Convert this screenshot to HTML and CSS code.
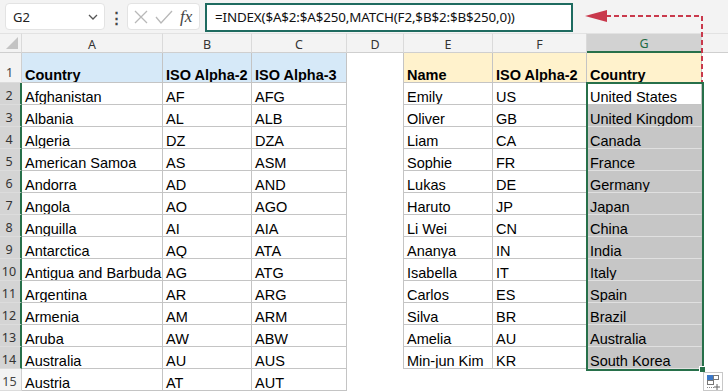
FILE: index.html
```html
<!DOCTYPE html>
<html lang="en">
<head>
    <meta charset="UTF-8">
    <meta name="viewport" content="width=device-width, initial-scale=1.0">
    <title>INDEX MATCH lookup</title>
    <link rel="stylesheet" href="styles.css">
</head>
<body>
<div class="app">
    <div class="toolbar">
        <div class="namebox">
            <span>G2</span>
            <svg class="chev" width="10" height="6" viewBox="0 0 10 6"><polyline points="1,1 5,5 9,1" fill="none" stroke="#555" stroke-width="1.3"/></svg>
        </div>
        <div class="dots">&#8942;</div>
        <div class="fxbox">
            <svg width="16" height="16" viewBox="0 0 16 16"><path d="M2 2 L14 14 M14 2 L2 14" stroke="#b8b8b8" stroke-width="1.3" fill="none"/></svg>
            <svg width="18" height="16" viewBox="0 0 18 16"><polyline points="1,8 6,14 17,2" stroke="#b8b8b8" stroke-width="1.3" fill="none"/></svg>
            <span class="fx">fx</span>
        </div>
        <div class="formula">=INDEX($A$2:$A$250,MATCH(F2,$B$2:$B$250,0))</div>
    </div>

    <div class="grid">
        <!-- column headers -->
        <div class="ch corner"><svg width="12" height="12" viewBox="0 0 12 12"><polygon points="12,0 12,12 0,12" fill="#c4c4c4"/></svg></div>
        <div class="ch">A</div>
        <div class="ch">B</div>
        <div class="ch">C</div>
        <div class="ch">D</div>
        <div class="ch">E</div>
        <div class="ch">F</div>
        <div class="ch sel">G</div>
        <div class="ch last"></div>

        <!-- row 1 -->
        <div class="rh first">1</div>
        <div class="t hb">Country</div>
        <div class="t hb">ISO Alpha-2</div>
        <div class="t hb">ISO Alpha-3</div>
        <div class="c edge"></div>
        <div class="t hy">Name</div>
        <div class="t hy">ISO Alpha-2</div>
        <div class="t hy">Country</div>
        <div class="c"></div>

        <div class="rh sel">2</div>
        <div class="t">Afghanistan</div><div class="t">AF</div><div class="t">AFG</div>
        <div class="c edge"></div>
        <div class="t">Emily</div><div class="t">US</div><div class="t">United States</div>
        <div class="c"></div>

        <div class="rh sel">3</div>
        <div class="t">Albania</div><div class="t">AL</div><div class="t">ALB</div>
        <div class="c edge"></div>
        <div class="t">Oliver</div><div class="t">GB</div><div class="t g">United Kingdom</div>
        <div class="c"></div>

        <div class="rh sel">4</div>
        <div class="t">Algeria</div><div class="t">DZ</div><div class="t">DZA</div>
        <div class="c edge"></div>
        <div class="t">Liam</div><div class="t">CA</div><div class="t g">Canada</div>
        <div class="c"></div>

        <div class="rh sel">5</div>
        <div class="t">American Samoa</div><div class="t">AS</div><div class="t">ASM</div>
        <div class="c edge"></div>
        <div class="t">Sophie</div><div class="t">FR</div><div class="t g">France</div>
        <div class="c"></div>

        <div class="rh sel">6</div>
        <div class="t">Andorra</div><div class="t">AD</div><div class="t">AND</div>
        <div class="c edge"></div>
        <div class="t">Lukas</div><div class="t">DE</div><div class="t g">Germany</div>
        <div class="c"></div>

        <div class="rh sel">7</div>
        <div class="t">Angola</div><div class="t">AO</div><div class="t">AGO</div>
        <div class="c edge"></div>
        <div class="t">Haruto</div><div class="t">JP</div><div class="t g">Japan</div>
        <div class="c"></div>

        <div class="rh sel">8</div>
        <div class="t">Anguilla</div><div class="t">AI</div><div class="t">AIA</div>
        <div class="c edge"></div>
        <div class="t">Li Wei</div><div class="t">CN</div><div class="t g">China</div>
        <div class="c"></div>

        <div class="rh sel">9</div>
        <div class="t">Antarctica</div><div class="t">AQ</div><div class="t">ATA</div>
        <div class="c edge"></div>
        <div class="t">Ananya</div><div class="t">IN</div><div class="t g">India</div>
        <div class="c"></div>

        <div class="rh sel">10</div>
        <div class="t">Antigua and Barbuda</div><div class="t">AG</div><div class="t">ATG</div>
        <div class="c edge"></div>
        <div class="t">Isabella</div><div class="t">IT</div><div class="t g">Italy</div>
        <div class="c"></div>

        <div class="rh sel">11</div>
        <div class="t">Argentina</div><div class="t">AR</div><div class="t">ARG</div>
        <div class="c edge"></div>
        <div class="t">Carlos</div><div class="t">ES</div><div class="t g">Spain</div>
        <div class="c"></div>

        <div class="rh sel">12</div>
        <div class="t">Armenia</div><div class="t">AM</div><div class="t">ARM</div>
        <div class="c edge"></div>
        <div class="t">Silva</div><div class="t">BR</div><div class="t g">Brazil</div>
        <div class="c"></div>

        <div class="rh sel">13</div>
        <div class="t">Aruba</div><div class="t">AW</div><div class="t">ABW</div>
        <div class="c edge"></div>
        <div class="t">Amelia</div><div class="t">AU</div><div class="t g">Australia</div>
        <div class="c"></div>

        <div class="rh sel">14</div>
        <div class="t">Australia</div><div class="t">AU</div><div class="t">AUS</div>
        <div class="c edge"></div>
        <div class="t">Min-jun Kim</div><div class="t">KR</div><div class="t g">South Korea</div>
        <div class="c"></div>

        <div class="rh">15</div>
        <div class="t">Austria</div><div class="t">AT</div><div class="t">AUT</div>
        <div class="c"></div>
        <div class="c"></div><div class="c"></div><div class="c"></div>
        <div class="c"></div>
    </div>

    <!-- selection outline over G2:G14 -->
    <div class="selection"></div>
    <div class="handle"></div>
    <div class="quick">
        <svg width="20" height="19" viewBox="0 0 20 19">
            <rect x="0.5" y="0.5" width="19" height="18" fill="#fff" stroke="#c8c8c8"/>
            <rect x="4" y="3" width="6" height="5" fill="#3b78c9"/>
            <rect x="10.5" y="3.5" width="5" height="4" fill="none" stroke="#777"/>
            <rect x="4.5" y="8.5" width="6" height="4" fill="none" stroke="#777"/>
            <path d="M4 15.5 H11" stroke="#888" stroke-dasharray="1 1"/>
            <path d="M14 12 V18 M11 15 H17" stroke="#666"/>
        </svg>
    </div>

    <!-- arrow pointing to the formula -->
    <svg class="arrow" width="728" height="100" viewBox="0 0 728 100">
        <path d="M606 16 H702 V82" fill="none" stroke="#c9394c" stroke-width="2" stroke-dasharray="5 3"/>
        <polygon points="585,16 607,10 607,22" fill="#c9394c"/>
    </svg>
</div>
</body>
</html>
```

FILE: styles.css
```css
body {
    margin: 0;
    background: #fff;
    font-family: "Liberation Sans", Arial, sans-serif;
    overflow: hidden;
}
.app {
    position: relative;
    width: 728px;
    height: 392px;
    overflow: hidden;
}
.toolbar {
    height: 33px;
    background: #f3f3f3;
    display: flex;
    align-items: center;
    padding-left: 5px;
    box-sizing: border-box;
    font-family: "Noto Sans", "Open Sans", sans-serif;
}
.namebox {
    width: 100px;
    height: 27px;
    background: #fff;
    border: 1px solid #e3e3e3;
    border-radius: 4px;
    box-sizing: border-box;
    display: flex;
    align-items: center;
    justify-content: space-between;
    padding: 0 6px 0 7px;
    font-size: 13px;
    color: #222;
}
.dots {
    width: 22px;
    text-align: center;
    font-size: 15px;
    font-weight: bold;
    color: #444;
}
.fxbox {
    width: 73px;
    height: 27px;
    background: #fff;
    border: 1px solid #e3e3e3;
    border-radius: 4px;
    box-sizing: border-box;
    display: flex;
    align-items: center;
    gap: 6px;
    padding-left: 5px;
}
.fx {
    font-family: "Liberation Serif", "DejaVu Serif", serif;
    font-style: italic;
    font-size: 17px;
    color: #444;
    margin-left: 1px;
}
.formula {
    margin-left: 5px;
    width: 368px;
    height: 29px;
    margin-top: 1px;
    border: 2px solid #1e6b60;
    background: #fff;
    box-sizing: border-box;
    display: flex;
    align-items: center;
    padding-left: 8px;
    font-size: 13.4px;
    color: #111;
    letter-spacing: -0.15px;
}
.grid {
    display: grid;
    grid-template-columns: 22px 141px 89px 95px 57px 89px 94px 115px 26px;
    grid-template-rows: 20px 30px repeat(14, 22px);
    font-size: 14.5px;
    line-height: 14px;
    color: #000;
}
.grid > div {
    box-sizing: border-box;
    display: flex;
    align-items: flex-end;
    padding: 0 0 0 3px;
    white-space: nowrap;
    overflow: hidden;
}
.grid > .ch {
    background: #f3f3f3;
    border-right: 1px solid #dadada;
    border-bottom: 1px solid #cfcfcf;
    border-top: 1px solid #e2e2e2;
    justify-content: center;
    align-items: center;
    padding: 3px 0 0 0;
    font-family: "Noto Sans", "Open Sans", sans-serif;
    font-size: 12.5px;
    color: #333;
}
.grid > .corner {
    justify-content: flex-end;
    align-items: flex-end;
    padding: 0 3px 3px 0;
}
.grid > .ch.last {
    border-right: none;
}
.grid > .ch.sel {
    background: #d2d2d2;
    border-bottom: 2px solid #27704a;
    color: #1e6b44;
}
.grid > .rh {
    background: #f3f3f3;
    border-right: 1px solid #cfcfcf;
    border-bottom: 1px solid #dcdcdc;
    justify-content: center;
    align-items: center;
    padding: 5px 2px 0 0;
    font-family: "Noto Sans", "Open Sans", sans-serif;
    font-size: 12.5px;
    color: #444;
}
.grid > .rh.first {
    align-items: flex-end;
    padding-bottom: 2px;
}
.grid > .rh.sel {
    background: #d4d4d4;
    border-right: 2px solid #27704a;
    color: #333;
}
.grid > .t {
    border-right: 1px solid #c4c4c4;
    border-bottom: 1px solid #c4c4c4;
}
.grid > .edge {
    border-right: 1px solid #c4c4c4;
}
.grid > .hb {
    background: #d6e9f8;
    font-weight: bold;
}
.grid > .hy {
    background: #fff2cc;
    font-weight: bold;
}
.grid > .g {
    background: #c6c6c6;
    border-bottom-color: #e0e0e0;
}
.selection {
    position: absolute;
    left: 586px;
    top: 82px;
    width: 118px;
    height: 289px;
    border: 2px solid #27704a;
    box-sizing: border-box;
}
.handle {
    position: absolute;
    left: 699px;
    top: 366px;
    width: 7px;
    height: 7px;
    background: #27704a;
    border: 1px solid #fff;
    box-sizing: border-box;
}
.quick {
    position: absolute;
    left: 703px;
    top: 372px;
    width: 20px;
    height: 19px;
}
.arrow {
    position: absolute;
    left: 0;
    top: 0;
}
```
